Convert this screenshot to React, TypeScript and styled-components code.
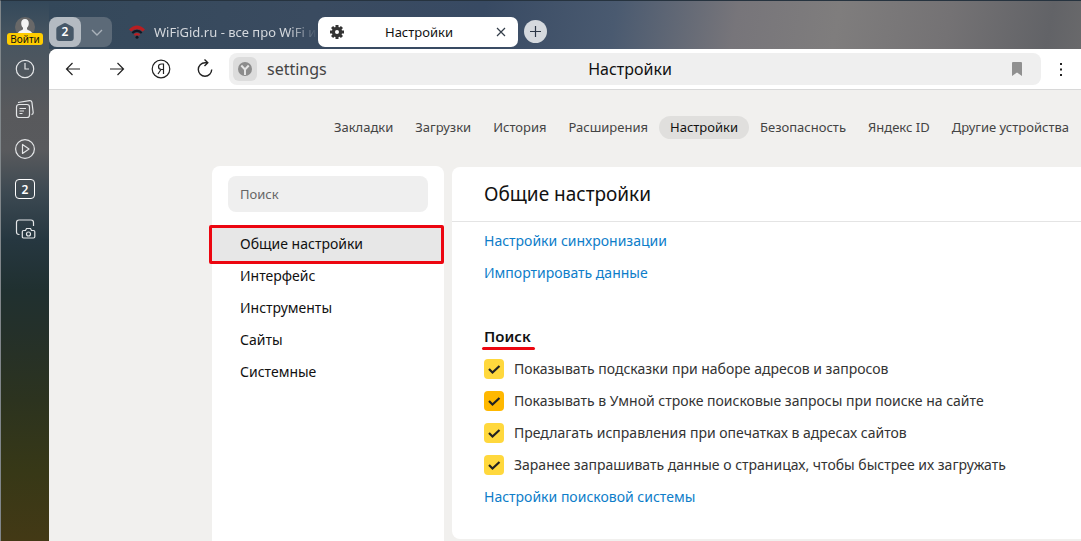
import React from "react";
import styled, { createGlobalStyle } from "styled-components";

const Global = createGlobalStyle`
  * { box-sizing: border-box; }
  body { margin: 0; background: #f1f0ee; }
  body, button, input { font-family: "Noto Sans", "Open Sans", sans-serif; }
  button { border: 0; padding: 0; background: none; color: inherit; cursor: pointer; }
  a { text-decoration: none; }
  svg { display: block; flex: none; }
`;

const Browser = styled.div`
  display: grid;
  grid-template-columns: 49px minmax(0, 1fr);
  min-height: 100vh;
  background: linear-gradient(#33485a, #485560 40px, #58595c 110px, #595a5d 150px, #3b4851 195px, #263740 240px, #203030 290px, #24302a 330px, #2c331f 400px, #373817 470px, #433915 541px);
`;

const Rail = styled.aside`
  display: flex;
  flex-direction: column;
  align-items: center;
  padding-top: 16px;
  border-left: 1px solid #80868a;
  border-top: 1px solid #26333f;
  color: #e4e6e8;
`;

const Login = styled.button`
  display: flex;
  flex-direction: column;
  align-items: center;
  height: 28px;
  margin-bottom: 4px;
`;

const LoginLabel = styled.span`
  position: relative;
  width: 36px;
  height: 12px;
  margin-top: -4px;
  border-radius: 3px;
  background: #fc0;
  color: #111;
  font-size: 10px;
  line-height: 12px;
`;

const RailButton = styled.button`
  display: grid;
  place-items: center;
  width: 40px;
  height: 40px;
  flex: none;
`;

const Count = styled.span`
  display: grid;
  place-items: center;
  width: 20px;
  height: 20px;
  border: 1px solid #fff;
  border-radius: 4px;
  color: #fff;
  font-size: 12px;
  font-weight: 600;
`;

const Window = styled.div`
  display: flex;
  flex-direction: column;
`;

const TabStrip = styled.div`
  display: flex;
  align-items: center;
  height: 49px;
  padding-top: 13px;
  border-top: 1px solid #26333f;
  background: linear-gradient(100deg, #34485a, #3a4b60 260px, #384a63 430px, #4a5a70 560px, #77757a 680px, #7f7d7d 780px, #747274 890px, #626367 990px, #69696b);
`;

const TabGroup = styled.div`
  display: flex;
  width: 63px;
  height: 30px;
  border-radius: 8px;
  background: #5c6a78;
`;

const GroupHome = styled.button`
  display: grid;
  place-items: center;
  width: 32px;
  height: 30px;
  border-radius: 8px;
  background: #b4bbc2;
  & > * { grid-area: 1 / 1; }
  & > span { color: #fff; font-size: 12px; font-weight: 600; line-height: 16px; }
`;

const GroupMore = styled.button`
  display: grid;
  place-items: center;
  flex: 1;
`;

const InactiveTab = styled.button`
  display: flex;
  align-items: center;
  gap: 9px;
  width: 206px;
  height: 30px;
  padding-left: 17px;
`;

const TabTitle = styled.span`
  flex: 1;
  white-space: nowrap;
  text-align: left;
  font-size: 13px;
  color: #d4d8dd;
  mask-image: linear-gradient(90deg, #000 134px, transparent 164px);
`;

const ActiveTab = styled.div`
  display: flex;
  align-items: center;
  width: 200px;
  height: 30px;
  padding: 0 10px 0 12px;
  border-radius: 7px;
  background: #fff;
  color: #111;
  font-size: 13px;
  & > span { flex: 1; text-align: center; }
`;

const NewTab = styled.button`
  display: grid;
  place-items: center;
  width: 23px;
  height: 23px;
  margin-left: 6px;
  border-radius: 50%;
  background: #d5d9de;
`;

const Page = styled.div`
  flex: 1;
  display: flex;
  flex-direction: column;
  overflow: hidden;
  border-top-left-radius: 8px;
  background: #f1f0ee;
`;

const Toolbar = styled.div`
  display: flex;
  align-items: center;
  height: 41px;
  padding-left: 2px;
  border-bottom: 1px solid #d8d8d8;
  background: #fff;
`;

const ToolButton = styled.button`
  display: grid;
  place-items: center;
  width: 44px;
  height: 40px;
  flex: none;
`;

const AddressBar = styled.div`
  display: grid;
  grid-template-columns: 1fr auto 1fr;
  align-items: center;
  flex: 1;
  height: 32px;
  margin-left: 2px;
  padding: 0 14px 0 4px;
  border-radius: 8px;
  background: #efefef;
  font-size: 16px;
`;

const Site = styled.div`
  display: flex;
  align-items: center;
  gap: 10px;
  color: #444;
`;

const SiteBadge = styled.span`
  display: grid;
  place-items: center;
  width: 24px;
  height: 24px;
  border-radius: 6px;
  background: #dcdcdc;
`;

const PageName = styled.span`
  color: #111;
`;

const Bookmark = styled.button`
  justify-self: end;
  padding: 0 4px;
`;

const MoreButton = styled(ToolButton)`
  width: 40px;
`;

const Sections = styled.nav`
  display: flex;
  justify-content: flex-end;
  padding: 26px 1px 27px 0;
`;

const Section = styled.a<{ $active?: boolean }>`
  padding: 0 11px;
  border-radius: 12px;
  background: ${(p) => (p.$active ? "#e0dfdd" : "transparent")};
  color: ${(p) => (p.$active ? "#111" : "#444")};
  font-size: 13px;
  line-height: 23px;
  white-space: nowrap;
`;

const Columns = styled.div`
  flex: 1;
  display: grid;
  grid-template-columns: 232px minmax(0, 1fr);
  gap: 8px;
  padding-left: 163px;
`;

const Menu = styled.div`
  padding-top: 10px;
  border-radius: 8px 8px 0 0;
  background: #fff;
`;

const SearchBox = styled.input`
  display: block;
  width: 200px;
  height: 36px;
  margin: 0 16px 16px;
  padding: 0 12px;
  border: 0;
  border-radius: 8px;
  background: #efefef;
  font-size: 13px;
  &::placeholder { color: #666; opacity: 1; }
`;

const MenuItem = styled.a<{ $active?: boolean }>`
  display: block;
  position: relative;
  z-index: 0;
  padding-left: 28px;
  color: #111;
  font-size: 14px;
  line-height: 32px;
  ${(p) => p.$active && `
    &::before {
      content: "";
      position: absolute;
      inset: -3px 0 -4px -3px;
      z-index: -1;
      border: 3px solid #ec0610;
      border-radius: 2px;
      background: #e7e7e7;
    }
  `}
`;

const Card = styled.main`
  align-self: start;
  margin-top: 1px;
  border-radius: 8px 0 0 8px;
  background: #fff;
`;

const CardTitle = styled.h1`
  margin: 0;
  padding-left: 32px;
  border-bottom: 1px solid #e4e4e4;
  color: #111;
  font-size: 19px;
  font-weight: 400;
  line-height: 54px;
`;

const CardBody = styled.div`
  display: flex;
  flex-direction: column;
  align-items: flex-start;
  padding: 3px 32px 26px;
  font-size: 14px;
  line-height: 32px;
`;

const TextLink = styled.a`
  color: #0d7dc9;
`;

const GroupTitle = styled.h2`
  margin: 31px 0 1px;
  position: relative;
  color: #111;
  font-size: 15px;
  font-weight: 600;
  &::after {
    content: "";
    position: absolute;
    inset: auto -4px 2px -2px;
    height: 3px;
    border-radius: 2px;
    background: #ec0610;
  }
`;

const Option = styled.label`
  display: grid;
  grid-template-columns: 20px auto;
  align-items: center;
  column-gap: 10px;
  color: #333;
  & > svg { grid-area: 1 / 1; pointer-events: none; z-index: 1; }
`;

const Check = styled.input<{ $hot?: boolean }>`
  grid-area: 1 / 1;
  appearance: none;
  width: 20px;
  height: 20px;
  margin: 0;
  border-radius: 4px;
  background: ${(p) => (p.$hot ? "#ffb800" : "#ffd83d")};
`;

const Line = ({ w = 22, sw = 1.2, color = "currentColor", children }: { w?: number; sw?: number; color?: string; children: React.ReactNode }) => (
  <svg width={w} height={w} viewBox={`0 0 ${w} ${w}`} fill="none" stroke={color} strokeWidth={sw} aria-hidden="true">
    {children}
  </svg>
);

const sections = ["Закладки", "Загрузки", "История", "Расширения", "Настройки", "Безопасность", "Яндекс ID", "Другие устройства"];
const menu = ["Общие настройки", "Интерфейс", "Инструменты", "Сайты", "Системные"];
const options = [
  "Показывать подсказки при наборе адресов и запросов",
  "Показывать в Умной строке поисковые запросы при поиске на сайте",
  "Предлагать исправления при опечатках в адресах сайтов",
  "Заранее запрашивать данные о страницах, чтобы быстрее их загружать",
];

export default function App() {
  return (
    <>
      <Global />
      <Browser>
        <Rail>
          <Login>
            <svg width="20" height="20" viewBox="0 0 20 20" aria-hidden="true">
              <circle cx="10" cy="10" r="10" fill="#686868" />
              <path d="M10 2c2.600 0 3.800 1.800 3.800 4.200 0 2-.8 3.600-1.800 4.500v1.300c0 1.200 3.500 1.300 5 3.800v4H3v-4c1.500-2.500 5-2.600 5-3.800v-1.300C7 9.800 6.200 8.200 6.200 6.200 6.200 3.800 7.400 2 10 2Z" fill="#f4f4f4" />
            </svg>
            <LoginLabel>Войти</LoginLabel>
          </Login>
          <RailButton aria-label="История">
            <Line><circle cx="11" cy="11" r="8.700" /><path d="M11 5v6h4" /></Line>
          </RailButton>
          <RailButton aria-label="Коллекции">
            <Line>
              <rect x="2.500" y="6.500" width="13" height="13" rx="2.500" />
              <path d="M4 4.500 15.500 2.600q2-.2 2.400 1.600l1.300 10.300q.1 1.800-1.700 2.200M5.500 10.500H12M5.500 13H10M5.500 15.500H8.500" />
            </Line>
          </RailButton>
          <RailButton aria-label="Видео">
            <Line><circle cx="11" cy="11" r="9.400" /><path d="M8.500 6.500v9l6.500-4.500Z" strokeLinejoin="round" /></Line>
          </RailButton>
          <RailButton aria-label="Вкладки"><Count>2</Count></RailButton>
          <RailButton aria-label="Снимок экрана">
            <Line>
              <path d="M5.500 16.500H5q-2.500 0-2.500-2.500V4.500Q2.500 2 5 2h12q2.500 0 2.500 2.500V8" />
              <path d="M9.500 12.500h2l1-2h4l1 2h2q1.300 0 1.300 1.300v5q0 1.200-1.300 1.200h-10q-1.200 0-1.200-1.200v-5q0-1.300 1.200-1.300Z" />
              <circle cx="14.500" cy="16" r="2" />
            </Line>
          </RailButton>
        </Rail>
        <Window>
          <TabStrip>
            <TabGroup>
              <GroupHome aria-label="Группа вкладок">
                <svg width="20" height="20" viewBox="0 0 20 20" aria-hidden="true">
                  <path d="M8.500 1.500q1.500-.9 3 0l6 3.200q1.200.8 1.200 2.300v9q0 3-3 3H4.300q-3 0-3-3V7q0-1.500 1.200-2.300Z" fill="#465868" />
                </svg>
                <span>2</span>
              </GroupHome>
              <GroupMore aria-label="Список групп">
                <Line w={12} color="#aab2ba" sw={1.400}><path d="m1 4 5 5 5-5" /></Line>
              </GroupMore>
            </TabGroup>
            <InactiveTab>
              <svg width="16" height="14" viewBox="0 0 16 14" fill="none" aria-hidden="true">
                <path d="M0 4.500Q8-3.500 16 4.500L13.800 6.500Q8 2 2.200 6.500Z" fill="#b81e22" />
                <path d="M2.600 7.200Q8 2.500 13.400 7.200L12 8.700Q8 5.500 4 8.700Z" fill="#101722" />
                <path d="M4.600 9.300Q8 6.500 11.400 9.300L10 10.800Q8 9.500 6 10.800Z" fill="#b81e22" />
                <circle cx="8" cy="12.300" r="1.500" fill="#101722" />
              </svg>
              <TabTitle>WiFiGid.ru - все про WiFi и</TabTitle>
            </InactiveTab>
            <ActiveTab>
              <svg width="14" height="14" viewBox="0 0 14 14" aria-hidden="true">
                <g fill="#333">
                  {[0, 45, 90, 135].map((a) => (
                    <rect key={a} x="5.500" y="0" width="3" height="14" transform={`rotate(${a} 7 7)`} />
                  ))}
                  <circle cx="7" cy="7" r="5.200" />
                </g>
                <circle cx="7" cy="7" r="2" fill="#fff" />
              </svg>
              <span>Настройки</span>
              <button aria-label="Закрыть вкладку">
                <Line w={14} sw={1.200} color="#333d49"><path d="m3 3 8 8M11 3l-8 8" /></Line>
              </button>
            </ActiveTab>
            <NewTab aria-label="Новая вкладка">
              <Line w={11} color="#2b3645"><path d="M5.500 0v11M0 5.500h11" /></Line>
            </NewTab>
          </TabStrip>
          <Page>
            <Toolbar>
              <ToolButton aria-label="Назад"><Line color="#222"><path d="M18 11H4.500M10.500 5l-6 6 6 6" /></Line></ToolButton>
              <ToolButton aria-label="Вперёд"><Line color="#222"><path d="M4 11h13.500M11.500 5l6 6-6 6" /></Line></ToolButton>
              <ToolButton aria-label="Яндекс">
                <Line color="#222"><circle cx="11" cy="11" r="8.800" /><path d="M13.500 16V6h-2Q8.500 6 8.500 8.800q0 2.700 3 2.700h2M11 11.500 8 16" /></Line>
              </ToolButton>
              <ToolButton aria-label="Обновить">
                <Line color="#222" sw={1.400}><path d="M17.700 11.500a6.700 6.700 0 1 1-6.700-6.700h2.500M10.500 1.500l3.300 3.300-3.300 3.300" /></Line>
              </ToolButton>
              <AddressBar>
                <Site>
                  <SiteBadge>
                    <svg width="14" height="14" viewBox="0 0 14 14" aria-hidden="true">
                      <circle cx="7" cy="7" r="7" fill="#8c8c8c" />
                      <path d="m3.300 3.500 3.700 4 3.700-4M7 7.500V13" fill="none" stroke="#e4e4e4" strokeWidth="2" />
                    </svg>
                  </SiteBadge>
                  settings
                </Site>
                <PageName>Настройки</PageName>
                <Bookmark aria-label="Добавить в закладки">
                  <svg width="11" height="14" viewBox="0 0 11 14" aria-hidden="true"><path d="M0 1q0-1 1-1h8q1 0 1 1v13l-5-3.500L0 14Z" fill="#909090" /></svg>
                </Bookmark>
              </AddressBar>
              <MoreButton aria-label="Меню">
                <svg width="2" height="13" viewBox="0 0 2 13" fill="#222" aria-hidden="true"><path d="M0 0h2v2H0ZM0 5.500h2v2H0ZM0 11h2v2H0Z" /></svg>
              </MoreButton>
            </Toolbar>
            <Sections>
              {sections.map((s) => <Section key={s} href="#" $active={s === "Настройки"}>{s}</Section>)}
            </Sections>
            <Columns>
              <Menu>
                <SearchBox type="search" placeholder="Поиск" aria-label="Поиск" />
                {menu.map((m, i) => <MenuItem key={m} href="#" $active={i === 0}>{m}</MenuItem>)}
              </Menu>
              <Card>
                <CardTitle>Общие настройки</CardTitle>
                <CardBody>
                  <TextLink href="#">Настройки синхронизации</TextLink>
                  <TextLink href="#">Импортировать данные</TextLink>
                  <GroupTitle>Поиск</GroupTitle>
                  {options.map((o, i) => (
                    <Option key={o}>
                      <Check type="checkbox" defaultChecked $hot={i === 1} />
                      <Line w={20} sw={2.200} color="#222"><path d="m5 10 3.500 3.500L15.500 7" /></Line>
                      <span>{o}</span>
                    </Option>
                  ))}
                  <TextLink href="#">Настройки поисковой системы</TextLink>
                </CardBody>
              </Card>
            </Columns>
          </Page>
        </Window>
      </Browser>
    </>
  );
}
